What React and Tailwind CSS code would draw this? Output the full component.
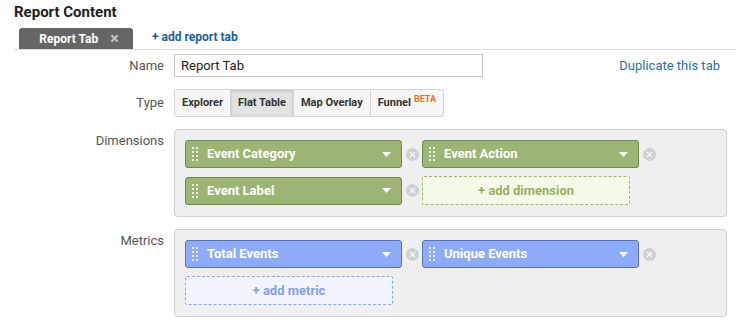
import React from 'react';

function Handle() {
  return (
    <span className="grid grid-cols-2 gap-x-[2px] gap-y-[2px] mr-[9px]">
      {Array.from({ length: 8 }).map((_, i) => (
        <span key={i} className="h-[2px] w-[2px] bg-white/80" />
      ))}
    </span>
  );
}

function Remove() {
  return (
    <span className="flex w-[20px] justify-center">
      <span className="flex h-[13px] w-[13px] items-center justify-center rounded-full bg-[#d0d0d0]">
        <svg width="7" height="7" viewBox="0 0 7 7">
          <path d="M1 1L6 6M6 1L1 6" stroke="#f4f4f4" strokeWidth="1.4" />
        </svg>
      </span>
    </span>
  );
}

function Pill({ label, tone }) {
  const cls =
    tone === 'green'
      ? 'bg-[#9cb574] border-[#6f8a4c]'
      : 'bg-[#8dabfa] border-[#5a72b6]';
  return (
    <div className="flex items-center">
      <div className={`flex h-[28px] w-[217px] items-center rounded-[3px] border pl-[6px] pr-[10px] ${cls}`}>
        <Handle />
        <span className="flex-1 text-[13px] font-bold text-white">{label}</span>
        <svg width="9" height="5" viewBox="0 0 9 5">
          <path d="M0 0H9L4.5 5Z" fill="#fff" />
        </svg>
      </div>
      <Remove />
    </div>
  );
}

function AddBox({ label, tone }) {
  const cls =
    tone === 'green'
      ? 'bg-[#f4fce9] border-[#9db86e] text-[#97b066]'
      : 'bg-[#f0f5fe] border-[#8ea7ea] text-[#86a0e6]';
  return (
    <div className={`flex h-[29px] w-[208px] items-center justify-center rounded-[2px] border border-dashed text-[13px] font-bold ${cls}`}>
      {label}
    </div>
  );
}

function Row({ label, children, top = 'items-center' }) {
  return (
    <div className={`flex ${top}`}>
      <div className={`w-[150px] text-right text-[13px] text-[#555] ${top === 'items-start' ? 'pt-[2px]' : ''}`}>{label}</div>
      <div className="ml-[10px] flex-1">{children}</div>
    </div>
  );
}

export default function App() {
  const types = ['Explorer', 'Flat Table', 'Map Overlay', 'Funnel'];
  return (
    <div className="h-[324px] w-[736px] bg-white pl-[14px] font-['Roboto',sans-serif] text-[#222]">
      <h1 className="pt-[2px] text-[15px] font-bold leading-[20px] text-[#222]">Report Content</h1>

      <div className="mt-[6px] flex items-end border-b border-[#ddd]">
        <div className="ml-[5px] flex h-[21px] w-[114px] items-center justify-center gap-[12px] rounded-t-[3px] bg-[#666] pl-[6px]">
          <span className="text-[12px] font-bold text-white">Report Tab</span>
          <span className="text-[16px] font-bold leading-none text-[#c4c4c4]">×</span>
        </div>
        <span className="mb-[3px] ml-[19px] text-[12px] font-bold text-[#1c5e9f]">+ add report tab</span>
      </div>

      <div className="mt-[4px]">
        <Row label="Name">
          <div className="flex items-center">
            <div className="flex h-[23px] w-[309px] items-center border border-[#c4c4c4] pl-[6px] text-[13px] text-[#222]">
              Report Tab
            </div>
            <span className="ml-auto pr-[16px] text-[13px] text-[#2a6db0]">Duplicate this tab</span>
          </div>
        </Row>
      </div>

      <div className="mt-[12px]">
        <Row label="Type">
          <div className="flex h-[28px] w-fit overflow-hidden rounded-[3px] border border-[#d3d3d3] bg-[#f6f6f6]">
            {types.map((t, i) => (
              <div
                key={t}
                className={`flex items-center px-[7px] text-[11px] font-bold text-[#333] ${i > 0 ? 'border-l border-[#d3d3d3]' : ''} ${t === 'Flat Table' ? 'bg-[#e2e2e2] shadow-[inset_0_1px_3px_rgba(0,0,0,0.15)]' : ''}`}
              >
                {t}
                {t === 'Funnel' && (
                  <span className="mb-[7px] ml-[3px] text-[9px] font-bold leading-none text-[#e8731e]">BETA</span>
                )}
              </div>
            ))}
          </div>
        </Row>
      </div>

      <div className="mt-[12px]">
        <Row label="Dimensions" top="items-start">
          <div className="mr-[9px] h-[88px] rounded-[4px] border border-[#d0d0d0] bg-[#efefef] pl-[10px] pt-[10px]">
            <div className="flex">
              <Pill label="Event Category" tone="green" />
              <Pill label="Event Action" tone="green" />
            </div>
            <div className="mt-[8px] flex">
              <Pill label="Event Label" tone="green" />
              <AddBox label="+ add dimension" tone="green" />
            </div>
          </div>
        </Row>
      </div>

      <div className="mt-[12px]">
        <Row label="Metrics" top="items-start">
          <div className="mr-[9px] h-[88px] rounded-[4px] border border-[#d0d0d0] bg-[#efefef] pl-[10px] pt-[10px]">
            <div className="flex">
              <Pill label="Total Events" tone="blue" />
              <Pill label="Unique Events" tone="blue" />
            </div>
            <div className="mt-[8px] flex">
              <AddBox label="+ add metric" tone="blue" />
            </div>
          </div>
        </Row>
      </div>
    </div>
  );
}
